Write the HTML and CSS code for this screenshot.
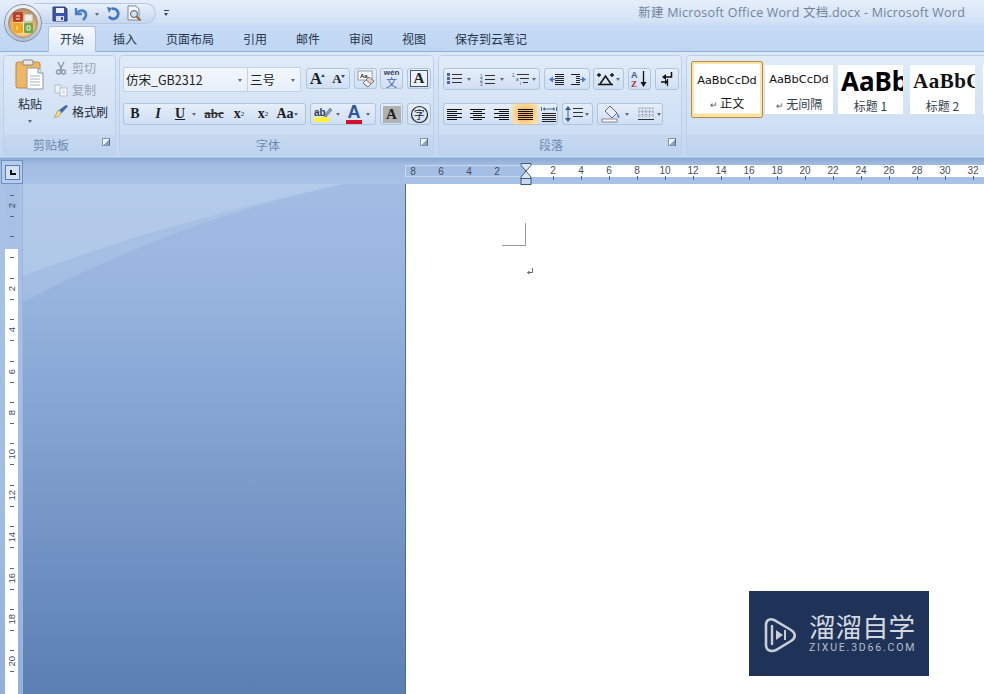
FILE: index.html
```html
<!DOCTYPE html>
<html lang="zh-CN">
<head>
<meta charset="utf-8">
<title>新建 Microsoft Office Word 文档.docx - Microsoft Word</title>
<link rel="stylesheet" href="styles.css">
</head>
<body>
<div class="app">
  <svg class="orb" width="40" height="40" viewBox="0 0 40 40">
    <defs>
      <radialGradient id="orbg" cx=".5" cy=".62" r=".6"><stop offset="0" stop-color="#fff6d8"/><stop offset=".55" stop-color="#f3c27a"/><stop offset="1" stop-color="#b9805a"/></radialGradient>
      <linearGradient id="ring" x1="0" y1="0" x2="0" y2="1"><stop offset="0" stop-color="#f1f5fa"/><stop offset="1" stop-color="#aebccd"/></linearGradient>
    </defs>
    <circle cx="20" cy="20" r="18.5" fill="url(#ring)" stroke="#8493a6"/>
    <circle cx="20" cy="20" r="14.5" fill="url(#orbg)" stroke="#9a8f86"/>
    <rect x="10" y="9" width="10" height="10" rx="1" fill="#b8432a"/>
    <rect x="21" y="11" width="9" height="8" rx="1" fill="#e4e8dc" stroke="#8a8a80" stroke-width=".6"/>
    <rect x="10" y="20" width="10" height="10" rx="1" fill="#f0a820"/>
    <rect x="21" y="20" width="9" height="10" rx="1" fill="#6cab4c"/>
    <path d="M13 13h4M13 16h4M23 14h5M23 16h5M14 23v4M24 23h3v4h-3z" stroke="#f7f2e0" stroke-width="1" fill="none"/>
  </svg>

  <header class="titlebar">
    <div class="qat">
      <svg class="qat-save" width="16" height="16" viewBox="0 0 16 16"><path d="M1 1h12l2 2v12H1z" fill="#3f56a8" stroke="#2c3b7c"/><rect x="4" y="2" width="8" height="5" fill="#eef3fb"/><rect x="4" y="10" width="8" height="5" fill="#d7dde9"/><rect x="9" y="11" width="2" height="3" fill="#3f56a8"/></svg>
      <svg class="qat-undo" width="15" height="14" viewBox="0 0 15 14"><path d="M2 1v6h6" fill="none" stroke="#4a7fc6" stroke-width="2.4"/><path d="M3 6c3-4 9-3 9 2 0 2-1 3-3 5" fill="none" stroke="#4a7fc6" stroke-width="2.6"/></svg>
      <span class="qat-drop"></span>
      <svg class="qat-redo" width="15" height="15" viewBox="0 0 15 15"><path d="M10 3.500A5 5 0 1 1 3.500 8" fill="none" stroke="#3f78c4" stroke-width="2.800" transform="rotate(-35 7.500 8.500)"/><path d="M2 1l5 1-3 5z" fill="#3f78c4"/></svg>
      <svg class="qat-print" width="18" height="18" viewBox="0 0 18 18"><path d="M2 1h8l3 3v11H2z" fill="#f6f7fa" stroke="#7d8698"/><circle cx="8" cy="9" r="3.500" fill="#cfe4f5" stroke="#556"/><path d="M10.500 11.500l4 4" stroke="#9b6a2c" stroke-width="2.200"/></svg>
    </div>
    <div class="qat-more"><i></i><b></b></div>
    <h1 class="doc-title">新建 Microsoft Office Word 文档.docx - Microsoft Word</h1>
  </header>

  <nav class="tabs">
    <span class="tab active">开始</span>
    <span class="tab">插入</span>
    <span class="tab">页面布局</span>
    <span class="tab">引用</span>
    <span class="tab">邮件</span>
    <span class="tab">审阅</span>
    <span class="tab">视图</span>
    <span class="tab">保存到云笔记</span>
  </nav>

  <section class="ribbon">
    <div class="group g-clip">
      <div class="gbody clip-body">
        <div class="paste">
          <svg width="30" height="31" viewBox="0 0 30 31">
            <rect x="1" y="3" width="24" height="26" rx="2" fill="#efb765" stroke="#b8884a"/>
            <rect x="8" y="1" width="10" height="5" rx="1" fill="#e8e9ee" stroke="#8b8577"/>
            <path d="M12 9h11l5 5v16H12z" fill="#fff" stroke="#8f98a8"/>
            <path d="M23 9v5h5" fill="#dfe5ee" stroke="#8f98a8"/>
            <path d="M15 17h10M15 20h10M15 23h10M15 26h10" stroke="#aab3c2"/>
          </svg>
          <span class="paste-label">粘贴</span>
          <span class="drop"></span>
        </div>
        <div class="clip-list">
          <div class="clip-item off">
            <svg width="14" height="14" viewBox="0 0 14 14"><path d="M4 1l4 8M10 1L6 9" stroke="#8f9aa8" stroke-width="1.400"/><circle cx="4.500" cy="11" r="2" fill="none" stroke="#8f9aa8" stroke-width="1.400"/><circle cx="9.500" cy="11" r="2" fill="none" stroke="#8f9aa8" stroke-width="1.400"/></svg>
            <span>剪切</span>
          </div>
          <div class="clip-item off">
            <svg width="14" height="14" viewBox="0 0 14 14"><path d="M1 2h6v8H1z" fill="#eef2f7" stroke="#b4bfcc"/><path d="M6 5h7v8H6z" fill="#f7f9fc" stroke="#b4bfcc"/><path d="M8 8h3M8 10h3" stroke="#c0c8d4"/></svg>
            <span>复制</span>
          </div>
          <div class="clip-item">
            <svg width="16" height="14" viewBox="0 0 16 14"><path d="M1 12c3 1 6-1 7-4L5 5C4 8 3 10 1 12z" fill="#efe09a" stroke="#a58b3c" stroke-width=".7"/><path d="M6 5l3 3 6-7-2-1z" fill="#3e6ca8"/></svg>
            <span>格式刷</span>
          </div>
        </div>
      </div>
      <div class="gcap">剪贴板<span class="launcher"></span></div>
    </div>

    <div class="group g-font">
      <div class="gbody font-body">
        <div class="row row-font1">
          <div class="combo c-name"><span>仿宋_GB2312</span><i class="drop"></i></div>
          <div class="combo c-size"><span>三号</span><i class="drop"></i></div>
          <div class="tg m-5">
            <span class="tb w21 serif big">A<sup class="tri"></sup></span>
            <span class="tb w21 serif small">A<sup class="tri down"></sup></span>
          </div>
          <div class="tg m-4 solo w23">
            <svg width="20" height="18" viewBox="0 0 20 18"><rect x="2" y="1" width="14" height="9" fill="#fff" stroke="#8d97a8"/><text x="4" y="8" class="svgt">Aa</text><path d="M7 13l6-6 5 4-6 6z" fill="#f2c8c8" stroke="#777"/><path d="M10 10l5 4-3 3-5-4z" fill="#f5f5f5" stroke="#777"/></svg>
          </div>
          <div class="tg m-3 solo w23 wen"><span class="wen-top">wén</span><span class="wen-bot">文</span></div>
          <div class="tg m-4 solo w24"><span class="boxa">A</span></div>
        </div>
        <div class="row row-font2">
          <div class="tg g-fmt">
            <span class="tb w22 serif bold">B</span>
            <span class="tb w24 serif ital">I</span>
            <span class="tb w20 serif bold ul">U</span>
            <i class="drop dm-u"></i>
            <span class="tb w26 serif strike">abc</span>
            <span class="tb w24 serif bold">x<sub>2</sub></span>
            <span class="tb w24 serif bold">x<sup>2</sup></span>
            <span class="tb w20 serif aa">Aa</span>
            <i class="drop dm2"></i>
          </div>
          <div class="tg m-4 g-color">
            <span class="tb w24 hl"><svg width="20" height="18" viewBox="0 0 20 18"><rect x="1" y="12" width="15" height="5" fill="#fff23c"/><text x="1" y="11" class="svgt2">ab</text><path d="M11 11l6-8 2 2-6 7z" fill="#7e9ac4" stroke="#556"  stroke-width=".5"/></svg></span>
            <i class="drop dm-c"></i>
            <span class="tb w22 fc">A</span>
            <i class="drop dm-c"></i>
          </div>
          <div class="tg m-4 solo w23"><span class="shade">A</span></div>
          <div class="tg m-4 solo w24">
            <svg width="19" height="19" viewBox="0 0 19 19"><circle cx="9.500" cy="9.500" r="8" fill="none" stroke="#222" stroke-width="1.200"/><text x="3.800" y="14" class="svgt3">字</text></svg>
          </div>
        </div>
      </div>
      <div class="gcap">字体<span class="launcher"></span></div>
    </div>

    <div class="group g-para">
      <div class="gbody para-body">
        <div class="row row-p1">
          <div class="tg">
            <span class="tb w22"><svg width="16" height="12" viewBox="0 0 16 12"><path d="M5 1.500h10M5 5.500h10M5 9.500h10" stroke="#333"/><path d="M0 0h3v3H0zM0 4h3v3H0zM0 8h3v3H0z" fill="#4a6b9a"/></svg></span>
            <i class="drop dm"></i>
            <span class="tb w22"><svg width="16" height="13" viewBox="0 0 16 13"><path d="M5 2.500h10M5 6.500h10M5 10.500h10" stroke="#333"/><text x="0" y="4.500" class="svgn">1</text><text x="0" y="8.500" class="svgn">2</text><text x="0" y="12.500" class="svgn">3</text></svg></span>
            <i class="drop dm"></i>
            <span class="tb w22"><svg width="18" height="14" viewBox="0 0 18 14"><path d="M5 2.500h12M8 6.500h9M11 10.500h5" stroke="#333"/><text x="0" y="4.500" class="svgn">1</text><text x="4" y="8.500" class="svgn">a</text><text x="8" y="13" class="svgn">i</text></svg></span>
            <i class="drop dm0"></i>
          </div>
          <div class="tg m-4">
            <span class="tb w22"><svg width="15" height="13" viewBox="0 0 15 13"><path d="M6 1.500h9M6 3.500h9M6 5.500h9M6 7.500h9M6 9.500h9M6 11.500h9" stroke="#222"/><path d="M0 6.500l4-3v6z" fill="#4a78b8"/><path d="M3 6.500h3" stroke="#4a78b8"/></svg></span>
            <span class="tb w22"><svg width="15" height="13" viewBox="0 0 15 13"><path d="M0 1.500h9M5 3.500h4M5 5.500h4M5 7.500h4M5 9.500h4M0 11.500h9" stroke="#222"/><path d="M15 6.500l-4-3v6z" fill="#4a78b8"/><path d="M9 6.500h3" stroke="#4a78b8"/></svg></span>
          </div>
          <div class="tg m-3 w31">
            <span class="tb w22"><svg width="19" height="14" viewBox="0 0 19 14"><path d="M2 12.500h15M4 12L9.500 4 15 12" fill="none" stroke="#111" stroke-width="1.500"/><path d="M1 3h4M3 1v4M14 3h4M16 1v4" stroke="#111" stroke-width="1.300"/></svg></span>
            <i class="drop dm0"></i>
          </div>
          <div class="tg m-4 solo w23">
            <svg width="17" height="18" viewBox="0 0 17 18"><text x="0" y="8" class="svga">A</text><text x="0" y="17" class="svgz">Z</text><path d="M12.500 1v14" stroke="#111" stroke-width="1.300"/><path d="M9.500 12l3 5 3-5z" fill="#111"/></svg>
          </div>
          <div class="tg m-4 solo w24">
            <svg width="16" height="16" viewBox="0 0 16 16"><path d="M12.500 1v5H6" fill="none" stroke="#111" stroke-width="1.500"/><path d="M7 3L3 6l4 3z" fill="#111"/><path d="M2 11h5" stroke="#111" stroke-width="1.500"/><path d="M6 8.500l3.500 2.500L6 13.500z" fill="#111"/><path d="M8.500 8v7" stroke="#111" stroke-width="1.200"/></svg>
          </div>
        </div>
        <div class="row row-p2">
          <div class="tg">
            <span class="tb w21"><svg class="al" width="15" height="11" viewBox="0 0 15 11"><path d="M0 .5h15M0 2.500h10M0 4.500h15M0 6.500h10M0 8.500h15M0 10.500h10"/></svg></span>
            <span class="tb w24"><svg class="al" width="15" height="11" viewBox="0 0 15 11"><path d="M0 .5h15M3 2.500h9M0 4.500h15M3 6.500h9M0 8.500h15M3 10.500h9"/></svg></span>
            <span class="tb w24"><svg class="al" width="15" height="11" viewBox="0 0 15 11"><path d="M0 .5h15M5 2.500h10M0 4.500h15M5 6.500h10M0 8.500h15M5 10.500h10"/></svg></span>
            <span class="tb w24 on"><svg class="al" width="15" height="11" viewBox="0 0 15 11"><path d="M0 .5h15M0 2.500h15M0 4.500h15M0 6.500h15M0 8.500h15M0 10.500h15"/></svg></span>
            <span class="tb w20 just"><svg width="16" height="16" viewBox="0 0 16 16"><path d="M1 7.500h14M1 9.500h14M1 11.500h14M1 13.500h14M1 15.500h14" stroke="#222"/><path d="M.5 1v4M15.500 1v4M2 3h12" stroke="#4a6b9a"/><path d="M2 3l2-2v4zM14 3l-2-2v4z" fill="#4a6b9a"/></svg></span>
          </div>
          <div class="tg m-4 w31">
            <span class="tb w22"><svg width="18" height="16" viewBox="0 0 18 16"><path d="M8 2.500h10M8 6.500h10M8 10.500h10" stroke="#333"/><path d="M3 1v14" stroke="#2f5d9e"/><path d="M3 0l3 4H0zM3 16l3-4H0z" fill="#2f5d9e"/></svg></span>
            <i class="drop dm0"></i>
          </div>
          <div class="tg m-4 w66">
            <span class="tb w26"><svg width="20" height="18" viewBox="0 0 20 18"><path d="M9 1l7 7-5 5-7-7z" fill="#e8eef7" stroke="#667"/><path d="M16 8c2 2 3 4 2 5-1 0-2-2-2-5z" fill="#3a76c4"/><rect x="1" y="14" width="15" height="3" fill="#f8f8f8" stroke="#889"/></svg></span>
            <i class="drop dm"></i>
            <span class="tb w22"><svg width="16" height="14" viewBox="0 0 16 14"><path d="M.5 1H16M.5 4.500H16M.5 8H16M1 1v10M4.500 1v10M8 1v10M11.500 1v10M15 1v10" stroke="#8a93a3" stroke-dasharray="1 1" fill="none"/><path d="M0 12.500h16" stroke="#333"/></svg></span>
            <i class="drop dm0"></i>
          </div>
        </div>
      </div>
      <div class="gcap">段落<span class="launcher"></span></div>
    </div>

    <div class="group g-style">
      <div class="gbody style-body">
        <div class="style sel"><span class="s-sample s1">AaBbCcDd</span><span class="s-name"><i class="ret">↵</i> 正文</span></div>
        <div class="style st2"><span class="s-sample s1">AaBbCcDd</span><span class="s-name"><i class="ret">↵</i> 无间隔</span></div>
        <div class="style st3"><span class="s-sample s2">AaBb</span><span class="s-name">标题 1</span></div>
        <div class="style st4"><span class="s-sample s3">AaBbC</span><span class="s-name">标题 2</span></div>
        <div class="style st5"></div>
      </div>
      <div class="gcap"></div>
    </div>
  </section>

  <section class="rulerbar">
    <div class="corner"><span class="corner-btn"><i></i></span></div>
    <div class="hruler">
      <div class="hr-gray"><span>8</span><span>6</span><span>4</span><span>2</span></div>
      <div class="hr-white"><span>2</span><span>4</span><span>6</span><span>8</span><span>10</span><span>12</span><span>14</span><span>16</span><span>18</span><span>20</span><span>22</span><span>24</span><span>26</span><span>28</span><span>30</span><span>32</span></div>
      <svg class="indent" width="12" height="22" viewBox="0 0 12 22"><path d="M1 .5h10v2L6 8 1 2.500zM6 8l5 6v1.500H1V14z" fill="#dce7f6" stroke="#3f5878"/><rect x="1" y="15.500" width="10" height="6" fill="#c7d8ef" stroke="#3f5878"/></svg>
    </div>
  </section>

  <main class="workspace">
    <div class="vstrip">
      <div class="vruler">
        <div class="vc"><span>2</span></div><div class="vc"></div>
        <div class="vc"><span>2</span></div><div class="vc"><span>4</span></div>
        <div class="vc"><span>6</span></div><div class="vc"><span>8</span></div>
        <div class="vc"><span>10</span></div><div class="vc"><span>12</span></div>
        <div class="vc"><span>14</span></div><div class="vc"><span>16</span></div>
        <div class="vc"><span>18</span></div><div class="vc"><span>20</span></div>
      </div>
    </div>
    <div class="canvas">
      <svg class="swoosh" width="382" height="510" viewBox="0 0 382 510">
        <path d="M0 92C110 50 220 22 320 0H0z" fill="#c4d8f1" opacity=".4"/>
        <path d="M0 118C110 60 220 22 320 0H0z" fill="#c4d8f1" opacity=".25"/>
      </svg>
    </div>
    <div class="page">
      <div class="crop"></div>
      <svg class="pmark" width="8" height="8" viewBox="0 0 8 8"><path d="M6.500 0v4.500H1.500" fill="none" stroke="#666"/><path d="M3.500 2.500l-2.500 2 2.500 2z" fill="#666"/></svg>
    </div>
  </main>

  <aside class="logo">
    <svg width="36" height="38" viewBox="0 0 36 38">
      <path d="M5 9c0-5 4-7 8-5l17 10c5 3 5 8 0 11L15 34c-4 2-10 1-10-5z" fill="none" stroke="#c8cdd6" stroke-width="2.600"/>
      <path d="M11 10v18" stroke="#c8cdd6" stroke-width="2.400" stroke-linecap="round"/>
      <path d="M15 14l7 5-7 5z" fill="#c8cdd6"/><rect x="23" y="14" width="2" height="10" fill="#c8cdd6"/>
    </svg>
    <div class="logo-text"><strong>溜溜自学</strong><span>ZIXUE.3D66.COM</span></div>
  </aside>
</div>
</body>
</html>
```

FILE: styles.css
```css
* { box-sizing: border-box; }
html, body { margin: 0; padding: 0; }
body {
  width: 984px; height: 694px; overflow: hidden;
  font-family: "Noto Sans CJK SC", "Liberation Sans", sans-serif;
  font-size: 12px; color: #1f2a3a;
}
.app { position: relative; width: 984px; height: 694px; overflow: hidden; display: flex; flex-direction: column; background: #bfd6f2; }

/* title bar */
.orb { position: absolute; left: 3px; top: 3px; z-index: 2; }
.titlebar { height: 26px; flex: none; display: flex; align-items: flex-start; padding: 3px 19px 0 34px; background: linear-gradient(#e6eefa, #d3e2f6 80%, #c8dbf4); }
.qat { width: 122px; height: 21px; display: flex; align-items: center; padding-left: 18px; background: linear-gradient(#e9f0fa, #c5d7ef); border: 1px solid #b4c8e2; border-left: 0; border-radius: 0 11px 11px 0; }
.qat-save { margin-right: 6px; }
.qat-undo { margin-right: 3px; }
.qat-drop { width: 0; height: 0; border: 2.500px solid transparent; border-top: 3px solid #5f7188; margin: 3px 6px 0 3px; }
.qat-redo { margin-right: 6px; }
.qat-more { width: 8px; margin: 7px 0 0 6px; display: flex; flex-direction: column; gap: 2px; align-items: center; }
.qat-more i { width: 5px; height: 1px; background: #33445c; }
.qat-more b { width: 0; height: 0; border: 2.500px solid transparent; border-top: 3px solid #33445c; }
.doc-title { margin: 1px 0 0 auto; font: 400 12.500px/18px "Open Sans", "Noto Sans CJK SC", sans-serif; letter-spacing: .22px; color: #71849b; white-space: nowrap; }

/* tabs */
.tabs { height: 26px; flex: none; display: flex; gap: 5px; padding-left: 48px; background: linear-gradient(#c7dbf5, #bfd6f3); border-bottom: 1px solid #8eaed6; }
.tab { padding: 0 12px; line-height: 26px; color: #24344a; white-space: nowrap; }
.tab.active { height: 26px; background: linear-gradient(#f6f9fe, #dfeafa); border: 1px solid #a9c1df; border-bottom: 0; border-radius: 3px 3px 0 0; padding: 0 11px; line-height: 24px; }

/* ribbon */
.ribbon { height: 106px; flex: none; display: flex; gap: 3px; padding: 3px 0 1px 3px; background: linear-gradient(#dbe7f7, #c5d8f1); overflow: hidden; border-bottom: 1px solid #afc7e6; }
.group { flex: none; display: flex; flex-direction: column; border: 1px solid #bbd0ea; border-radius: 4px; overflow: hidden; background: #cfdff3; }
.g-clip { width: 113px; }
.g-font { width: 315px; }
.g-para { width: 244px; margin-left: 1px; }
.g-style { width: 320px; margin-left: 1px; }
.gbody { height: 79px; flex: none; background: linear-gradient(#e0ebf8, #cddef3); }
.gcap { position: relative; height: 21px; flex: none; text-align: center; padding-right: 17px; line-height: 20px; color: #6c8bb4; background: linear-gradient(#c7d9f0, #bdd2ed); }
.g-para .gcap { padding-right: 18px; }
.launcher { position: absolute; right: 5px; top: 3px; width: 8px; height: 8px; border: 1px solid #7c93ae; border-right-color: #566d8a; background: linear-gradient(135deg, #f4f7fb 50%, #8ba4c2 50%); }
.row { display: flex; align-items: flex-start; }
.drop { display: block; width: 0; height: 0; border: 2.500px solid transparent; border-top: 3px solid #5b6c82; flex: none; }
.dm { margin: 3px 6px 0 1px; align-self: center; }
.dm-u { margin: 3px 5px 0 2px; align-self: center; }
.dm-c { margin: 3px 3px 0 1px; align-self: center; }
.dm2 { margin: 3px 2px 0 -1px; align-self: center; }
.dm0 { margin: 3px 3px 0 0; align-self: center; }

/* clipboard */
.clip-body { display: flex; padding: 3px 0 0 10px; }
.paste { width: 32px; display: flex; flex-direction: column; align-items: center; }
.paste-label { margin-top: 5px; font-size: 12px; line-height: 17px; color: #1f2a3a; }
.paste .drop { margin-top: 8px; }
.clip-list { margin: -2px 0 0 7px; display: flex; flex-direction: column; gap: 5px; }
.clip-item { height: 17px; display: flex; align-items: center; gap: 3px; white-space: nowrap; line-height: 17px; }
.clip-item:first-child { margin-top: 2px; }
.clip-item.off { color: #98a3b2; }
.clip-item svg { flex: none; width: 16px; }

/* toolbars */
.tg { display: flex; align-items: center; height: 22px; border: 1px solid #aec4df; border-radius: 3px; background: linear-gradient(#e6eef9, #cfdff3); flex: none; }
.tb { display: flex; align-items: center; justify-content: center; height: 100%; flex: none; position: relative; color: #1a1f2a; }
.solo { justify-content: center; }
.just { justify-content: flex-end; }
.m-5 { margin-left: 5px; } .m-4 { margin-left: 4px; } .m-3 { margin-left: 3px; }
.w20 { width: 20px; } .w21 { width: 21px; } .w22 { width: 22px; } .w23 { width: 23px; } .w24 { width: 24px; } .w26 { width: 26px; } .w31 { width: 31px; } .w66 { width: 66px; }
.g-fmt { width: 183px; }
.g-color { width: 66px; }
.serif { font-family: "Liberation Serif", serif; font-size: 14px; }
.bold { font-weight: 700; }
.ital { font-style: italic; font-weight: 700; }
.ul { text-decoration: underline; }
.strike { text-decoration: line-through; font-weight: 700; font-size: 13px; color: #333; }
.aa { font-weight: 700; font-size: 14px; }
.tb sub, .tb sup { font-size: 7px; line-height: 0; font-weight: 400; }
.big { font-size: 17px; font-weight: 700; }
.small { font-size: 13px; font-weight: 700; }
.tri { display: inline-block; width: 0; height: 0; border: 2.500px solid transparent; border-bottom: 3px solid #2c4a7a; margin: -9px 0 0 -1px; vertical-align: top; }
.tri.down { border-bottom: 0; border-top: 3px solid #2c4a7a; margin-top: -5px; }
.svgt { font: 700 6px "Liberation Sans", sans-serif; fill: #222; }
.svgt2 { font: 700 10px "Liberation Sans", sans-serif; fill: #2c3a5a; }
.svgt3 { font: 400 11px "Noto Sans CJK SC", sans-serif; fill: #222; }
.svgn { font: 400 4.500px "Liberation Sans", sans-serif; fill: #38527e; }
.svga { font: 700 9px "Liberation Sans", sans-serif; fill: #3a5f9c; }
.svgz { font: 700 9px "Liberation Serif", serif; fill: #a3323c; }
.al { stroke: #111; fill: none; }
.on { background: radial-gradient(ellipse at center, #f7a64a 10%, #fbd38c 60%, #fde7b5); box-shadow: 0 0 2px #fbc77b; }
.fc { font: 700 18px/16px "Liberation Sans", sans-serif; color: #2f54a0; flex-direction: column; }
.fc::after { content: ""; display: block; width: 16px; height: 4px; background: #d3112a; }
.wen { flex-direction: column; line-height: 1; }
.wen-top { font: 700 8px/8px "Liberation Sans", sans-serif; color: #2c3d60; }
.wen-bot { font: 400 11px/11px "Noto Sans CJK SC", sans-serif; color: #3b64b0; }
.boxa { width: 18px; height: 17px; border: 1px solid #4d5a6c; background: #edf2f9; font: 700 15px/15px "Liberation Serif", serif; text-align: center; color: #222; }
.shade { width: 18px; height: 17px; background: #b0b0b0; font: 700 15px/17px "Liberation Serif", serif; text-align: center; color: #222; }

/* font group */
.font-body { padding: 11px 0 0 3px; }
.row-font1 { height: 25px; }
.row-font1 .tg { margin-top: 1px; height: 21px; }
.row-font2 { margin-top: 11px; }
.combo { height: 25px; display: flex; align-items: center; border: 1px solid #c0d2e8; background: linear-gradient(#f3f7fc, #e7eff9); font-size: 12.500px; color: #222; flex: none; }
.combo span { flex: 1; padding-left: 2px; font-family: "Noto Sans CJK SC", sans-serif; white-space: nowrap; }
.combo .drop { margin: 3px 5px 0 0; }
.c-name { width: 125px; border-radius: 2px 0 0 2px; }
.c-size { width: 53px; border-left: 0; border-radius: 0 2px 2px 0; }

/* paragraph group */
.para-body { padding: 12px 0 0 4px; }
.row-p2 { margin-top: 13px; }

/* styles */
.style-body { display: flex; align-items: center; padding: 0 0 12px 4px; }
.style { flex: none; width: 65px; height: 49px; background: #fff; display: flex; flex-direction: column; align-items: center; justify-content: space-between; overflow: hidden; padding-top: 2px; }
.style.sel { width: 72px; height: 57px; border: 1px solid #b68a4a; border-radius: 2px; box-shadow: inset 0 0 0 2px #fde5a3, inset 0 -2px 2px 1px #f9cf72; padding-top: 6px; padding-bottom: 4px; }
.st2 { width: 68px; margin-left: 2px; }
.st3 { margin-left: 5px; }
.st4 { margin-left: 7px; }
.st5 { margin-left: 8px; }
.s-sample { white-space: nowrap; line-height: 24px; }
.s1 { font: 400 11.300px/26px "DejaVu Sans", sans-serif; color: #111; }
.s2 { font: 700 26px/28px "Noto Sans", sans-serif; color: #000; align-self: flex-start; padding-left: 3px; }
.s3 { font: 700 21px/28px "Liberation Serif", serif; color: #111; letter-spacing: .5px; align-self: flex-start; padding-left: 3px; }
.s-name { line-height: 17px; white-space: nowrap; color: #33404f; }
.ret { font-style: normal; font-size: 9px; color: #555; }
.sel .s-name { color: #111; }

/* rulers */
.rulerbar { position: relative; height: 26px; flex: none; display: flex; background: linear-gradient(#8aa9d5, #a2bce2 25%, #a9c3e7); }
.corner { position: absolute; left: 1px; top: 2px; width: 22px; height: 24px; background: #b6cced; border: 1px solid #6f90c4; display: flex; align-items: center; justify-content: center; }
.corner-btn { width: 15px; height: 15px; background: #d3e0f3; border: 1px solid #5f7ba3; position: relative; }
.corner-btn i { position: absolute; left: 4px; top: 4px; width: 6px; height: 5px; border-left: 2px solid #111; border-bottom: 2px solid #111; }
.hruler { position: relative; margin: 7px 0 0 405px; width: 579px; height: 15px; display: flex; font: 400 10px/12px "Liberation Sans", sans-serif; color: #3f4d60; }
.hr-gray { width: 120px; height: 12px; flex: none; display: flex; justify-content: flex-end; padding-right: 14px; overflow: hidden; background: #a5bee4; border: 1px solid #c8d8ef; border-right: 0; }
.hr-gray span { width: 28px; flex: none; text-align: center; }
.hr-white { flex: 1; display: flex; padding-left: 14px; background: linear-gradient(#fff 12px, transparent 12px); overflow: hidden; }
.hr-white span { width: 28px; height: 15px; flex: none; text-align: center; background: linear-gradient(#55677f, #55677f) center bottom / 1px 4px no-repeat; }
.indent { position: absolute; left: 115px; top: -2px; }

/* workspace */
.workspace { flex: 1; min-height: 0; display: flex; }
.vstrip { width: 23px; flex: none; padding-left: 5px; background: linear-gradient(#a9c3e7, #a3bde3 60%, #93b0da); border-right: 1px solid #9cb7dd; }
.vruler { width: 13px; height: 510px; padding-top: 1px; overflow: hidden; background: linear-gradient(#a7c0e4 65px, #fff 65px); font: 400 9.500px/1 "Liberation Sans", sans-serif; color: #3f4d60; }
.vc { height: 41.400px; display: flex; align-items: center; justify-content: center; background:
    linear-gradient(#55677f, #55677f) center 10px / 4px 1px no-repeat,
    linear-gradient(#55677f, #55677f) center 31px / 4px 1px no-repeat; }
.vc span { writing-mode: vertical-rl; transform: rotate(180deg); }
.canvas { position: relative; width: 382px; flex: none; background: linear-gradient(#a2bde4, #98b5df 20%, #7a9aca 60%, #5a7fb3); overflow: hidden; }
.swoosh { position: absolute; left: 0; top: 0; }
.page { flex: 1; background: #fff; border-left: 1px solid #516c93; padding-top: 39px; }
.crop { width: 24px; height: 23px; margin-left: 96px; border-right: 1px solid #9a9a9a; border-bottom: 1px solid #9a9a9a; }
.pmark { display: block; margin: 22px 0 0 120px; }

/* watermark */
.logo { position: absolute; left: 749px; top: 591px; width: 180px; height: 85px; background: #1f3359; display: flex; align-items: center; padding: 3px 0 0 12px; gap: 12px; color: #d5d9e0; }
.logo-text { display: flex; flex-direction: column; margin-top: -6px; }
.logo-text strong { font: 400 26.500px/30px "Noto Sans CJK SC", sans-serif; white-space: nowrap; }
.logo-text span { font: 400 10.500px/13px "Roboto", sans-serif; letter-spacing: 1.800px; color: #b8becb; white-space: nowrap; }
```
